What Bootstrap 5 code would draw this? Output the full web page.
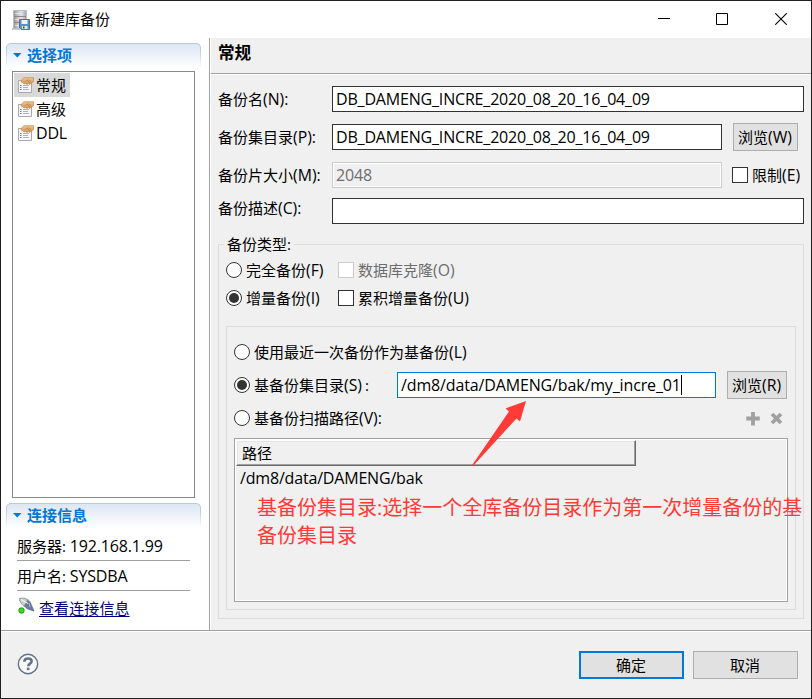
<!DOCTYPE html>
<html lang="zh-CN">
<head>
<meta charset="utf-8">
<meta name="viewport" content="width=device-width, initial-scale=1">
<title>新建库备份</title>
<link href="https://cdn.jsdelivr.net/npm/bootstrap@5.3.0/dist/css/bootstrap.min.css" rel="stylesheet">
<style>
body{font-family:"Open Sans","Noto Sans CJK SC",sans-serif;font-size:15px;line-height:20px;color:#000;background:#fff}
svg{display:block;flex:none}
.dialog{width:812px;height:699px;border:1px solid #202020;background:#f0f0f0}
.titlebar{height:37px;background:#fff;padding-left:10px}
.titlebar .caption{margin-left:4px;padding-bottom:1px}
.winbtn{width:59px;height:37px;padding-bottom:1px}
.winbtn.max{padding-right:2px}
.winbtn.close-x{padding-right:2px}
.side{width:209px;background:#fff;border-right:1px solid #a0a0a0;padding:5px 8px 0 5px}
.sect{height:25px;border:1px solid #b4cbe2;border-bottom:0;border-radius:5px 5px 0 0;background:linear-gradient(#dde6f4,#fff);color:#0078d7;font-weight:700;padding:0 0 2px 6px;position:relative}
.sect::before,.sect::after{content:"";position:absolute;bottom:0;width:1px;height:18px;background:linear-gradient(transparent,#fff)}
.sect::before{left:-1px}
.sect::after{right:-1px}
.sect span{padding-left:5px}
.tree{margin:3px 6px 5px 6px;height:427px;border:1px solid #828790;padding:1px}
.node{height:24px;padding:0 4px;width:max-content}
.node span{padding-left:2px}
.node span:not(.lat){padding-bottom:1px}
.node.sel{background:#d9d9d9}
.conninfo{padding-top:3px}
.info{margin:0 11px 0 11px;height:30px;border-bottom:1px solid #a0a0a0;white-space:pre}
.connlink{height:33px;padding-left:12px}
.viewlink{color:#00007f;text-decoration:underline;text-underline-offset:2px;text-decoration-thickness:1px;margin-left:4px;letter-spacing:.1px}
.main{border-left:1px solid #fff}
.pagehead{height:36px;border-bottom:1px solid #a0a0a0;box-shadow:0 1px #fff;padding:0 0 5px 7px;font-size:16.6px;font-weight:700}
.lines{padding:12px 7px 0 7px}
.line{height:26px}
.lab{width:114px;flex:none;white-space:nowrap;padding-bottom:1px}
.lab.up{padding-bottom:6px}
.lat{font-size:16px;letter-spacing:-.18px}
.entry{height:26px;border:1px solid #333;background:#fff;padding:0 0 0 3px;white-space:nowrap;color:#000}
.entry.off{border-color:#ccc;background:#f0f0f0;box-shadow:inset 0 0 0 1px #fff;color:#6d6d6d}
.entry.focus{border-color:#0078d7;letter-spacing:-.14px}
.push{border:1px solid #adadad;background:#e1e1e1;height:28px;border-radius:0;padding:0 1px 0 0;font-size:15px;line-height:20px;color:#000;flex:none}
.push .lat,.opt .lat,.lab .lat{font-size:15.800px;letter-spacing:0;line-height:1}
.push.def{border:2px solid #0078d7}
.tick{width:16px;height:16px;border:1px solid #333;background:#fff;flex:none}
.tick.off{border-color:#ccc}
.opt{gap:4px;white-space:nowrap}
.group{border:1px solid #dcdcdc}
.outer{margin-top:20px;height:375px;padding:0 7px}
.legendtxt{width:70px;height:20px;margin:-11px 0 0 -2px;padding-left:3px;background:#f0f0f0;white-space:nowrap}
.inner{height:284px;margin-top:18px;padding:0 7px}
.tools{gap:10px;padding:2px 5px 0 0}
.grid{height:164px;margin-top:10px;border:1px solid #a0a0a0;box-shadow:inset 0 0 0 1px #fff;padding:1px}
.colhead{width:400px;height:26px;border:1px solid;border-color:#fff #696969 #696969 #fff;box-shadow:inset -1px -1px #a0a0a0,inset 1px 1px #e3e3e3;padding-left:5px}
.cell{padding:2px 0 0 4px}
.note{left:256px;top:493px;font-size:20px;line-height:28px;color:#ff3a37;white-space:nowrap}
.arrow{left:464px;top:395px}
.caret{width:1px;height:20px;background:#000}
.foot{height:68px;border-top:1px solid #a0a0a0;box-shadow:inset 0 1px #fff;padding:0 13px 0 16px}
.help{margin-bottom:2px}
</style>
<script src="https://cdn.jsdelivr.net/npm/bootstrap@5.3.0/dist/js/bootstrap.bundle.min.js"></script>
</head>
<body>
<svg width="0" height="0" class="position-absolute">
  <defs>
    <linearGradient id="hand" x2="0" y2="1"><stop stop-color="#f3c990"/><stop offset="1" stop-color="#d0914f"/></linearGradient>
    <linearGradient id="srv"><stop stop-color="#8f8f8f"/><stop offset=".35" stop-color="#c8c8cc"/><stop offset=".6" stop-color="#e2e4f2"/><stop offset="1" stop-color="#a0a3ad"/></linearGradient>
    <symbol id="prop" viewBox="0 0 16 16">
      <path d="M.5 3.500h13v12H.5z" fill="#f6f6f6" stroke="#a9a9a9"/>
      <path d="M2 8.500h1.500M2 12.500h1.500" stroke="#5470a8"/><path d="M2 10.500h1.500" stroke="#5a9a5a"/>
      <path d="M5 8.500h6M5 10.500h5M5 12.500h6" stroke="#b4b4b4"/>
      <path d="M3.500 3 6 .7h9.500v4L13 6.500l-1.500 1-1-1-1.500 1-1.200-1-1.800.5-1-1.500-1.800-.3z" fill="url(#hand)" stroke="#c08a50" stroke-width=".7"/>
      <path d="M7 4.500l2-1.500 3 3M9.500 2.500l3.500 2" fill="none" stroke="#a66f3a" stroke-width=".5"/>
    </symbol>
  </defs>
</svg>
<div class="dialog d-flex flex-column position-relative overflow-hidden">
  <header class="titlebar d-flex align-items-center">
    <svg width="20" height="20" viewBox="0 0 20 20">
      <path d="M1 18h16l2 2H1z" fill="#ccc"/>
      <path d="M2.500.5h13v18h-13z" fill="url(#srv)" stroke="#bdbdbd"/>
      <path d="M3 6.500h12M3 12.500h12" stroke="#8a8a8a"/><path d="M4 3.500h5M4 9.500h4M4 15.500h4" stroke="#fff" opacity=".6"/>
      <path d="M8.500 9.500h10v10h-8l-2-2z" fill="#5e8fc6" stroke="#4474a8"/>
      <path d="M10.500 10h6v4h-6z" fill="#eef4fb"/><path d="M11 16h5.500v3H11z" fill="#e4e8ee"/><path d="M12 16.500h1.500v2H12z" fill="#345"/>
    </svg>
    <span class="caption">新建库备份</span>
    <div class="d-flex ms-auto">
      <div class="winbtn d-flex align-items-center justify-content-center"><svg width="12" height="12"><path d="M0 5.500h12" stroke="#000"/></svg></div>
      <div class="winbtn max d-flex align-items-center justify-content-center"><svg width="12" height="12"><path d="M.5.5h11v11H.5z" fill="none" stroke="#000"/></svg></div>
      <div class="winbtn close-x d-flex align-items-center justify-content-center"><svg width="12" height="12"><path d="M.2.2l11.600 11.600M11.800.2L.2 11.800" fill="none" stroke="#000" stroke-width="1.100"/></svg></div>
    </div>
  </header>
  <div class="d-flex flex-grow-1">
    <aside class="side flex-shrink-0">
      <div class="sect d-flex align-items-center"><svg width="9" height="5"><path d="M0 0h8.500L4.300 4.500z" fill="#0078d7"/></svg><span>选择项</span></div>
      <div class="tree">
        <div class="node sel d-flex align-items-center"><svg width="16" height="16"><use href="#prop"/></svg><span>常规</span></div>
        <div class="node d-flex align-items-center"><svg width="16" height="16"><use href="#prop"/></svg><span>高级</span></div>
        <div class="node d-flex align-items-center"><svg width="16" height="16"><use href="#prop"/></svg><span class="lat">DDL</span></div>
      </div>
      <div class="sect d-flex align-items-center"><svg width="9" height="5"><path d="M0 0h8.500L4.300 4.500z" fill="#0078d7"/></svg><span>连接信息</span></div>
      <section class="conninfo">
        <div class="info d-flex align-items-center"><span>服务器: <span class="lat">192.168.1.99</span></span></div>
        <div class="info d-flex align-items-center"><span>用户名: <span class="lat">SYSDBA</span></span></div>
      </section>
      <div class="connlink d-flex align-items-center">
        <svg width="17" height="18" viewBox="0 0 17 18" class="mb-1">
          <path d="M1.500 1.500c4-1 8 0 10.500 3l1 5.500c-5 1-9-1-11-6z" fill="#c9d0d3" stroke="#8e979b"/>
          <path d="M9.500 3.500l3 2.500 3.500 8-6.500-2-3-3z" fill="#6b7b9c" stroke="#56647f" stroke-width=".7"/>
          <path d="M3 2.500l7 4" stroke="#fff"/><path d="M11 6l1 4" stroke="#b4c0d8"/>
          <circle cx="3.500" cy="13.500" r="2.700" fill="#35e01b" stroke="#169b0d"/>
        </svg>
        <a class="viewlink" href="#">查看连接信息</a>
      </div>
    </aside>
    <main class="main flex-grow-1">
      <div class="pagehead d-flex align-items-center">常规</div>
      <div class="lines">
        <div class="line d-flex align-items-center"><div class="lab">备份名<span class="lat">(N):</span></div><div class="entry lat flex-grow-1 d-flex align-items-center">DB_DAMENG_INCRE_2020_08_20_16_04_09</div></div>
        <div class="line d-flex align-items-center" style="margin-top:12px"><div class="lab">备份集目录<span class="lat">(P):</span></div><div class="entry lat d-flex align-items-center" style="width:390px">DB_DAMENG_INCRE_2020_08_20_16_04_09</div><button class="btn push" style="width:65px;margin-left:11px">浏览<span class="lat">(W)</span></button></div>
        <div class="line d-flex align-items-center" style="margin-top:12px"><div class="lab">备份片大小<span class="lat">(M):</span></div><div class="entry off lat d-flex align-items-center" style="width:390px">2048</div><div class="opt d-flex align-items-center" style="margin-left:10px"><span class="tick"></span><span>限制<span class="lat">(E)</span></span></div></div>
        <div class="line d-flex align-items-center" style="margin-top:10px"><div class="lab up">备份描述<span class="lat">(C):</span></div><div class="entry flex-grow-1"></div></div>
        <section class="group outer">
          <div class="legendtxt">备份类型:</div>
          <div class="d-flex" style="margin-top:6px">
            <div style="width:112px">
              <div class="opt d-flex align-items-center"><span class="tick rounded-circle"></span><span>完全备份<span class="lat">(F)</span></span></div>
              <div class="opt d-flex align-items-center mt-2"><svg width="16" height="16"><circle cx="8" cy="8" r="7.500" fill="#fff" stroke="#333"/><circle cx="8" cy="8" r="5" fill="#333"/></svg><span>增量备份<span class="lat">(I)</span></span></div>
            </div>
            <div>
              <div class="opt d-flex align-items-center" style="color:#6d6d6d"><span class="tick off"></span><span>数据库克隆<span class="lat">(O)</span></span></div>
              <div class="opt d-flex align-items-center mt-2"><span class="tick"></span><span>累积增量备份<span class="lat">(U)</span></span></div>
            </div>
          </div>
          <div class="group inner">
            <div class="opt d-flex align-items-center" style="margin-top:15px"><span class="tick rounded-circle"></span><span>使用最近一次备份作为基备份<span class="lat">(L)</span></span></div>
            <div class="d-flex align-items-center" style="height:28px;margin-top:9px">
              <div class="opt d-flex align-items-center" style="width:163px"><svg width="16" height="16"><circle cx="8" cy="8" r="7.500" fill="#fff" stroke="#333"/><circle cx="8" cy="8" r="5" fill="#333"/></svg><span>基备份集目录<span class="lat">(S)</span><span style="padding-left:3px">:</span></span></div>
              <div class="entry focus lat d-flex align-items-center" style="width:319px">/dm8/data/DAMENG/bak/my_incre_01<span class="caret"></span></div>
              <button class="btn push" style="width:60px;margin-left:11px">浏览<span class="lat">(R)</span></button>
            </div>
            <div class="d-flex align-items-center justify-content-between" style="margin-top:9px">
              <div class="opt d-flex align-items-center"><span class="tick rounded-circle"></span><span>基备份扫描路径<span class="lat">(V):</span></span></div>
              <div class="tools d-flex">
                <svg width="14" height="14"><path d="M7 0v13.500M.3 6.500h13.500" stroke="#a0a0a0" stroke-width="3.800"/></svg>
                <svg width="13" height="14"><path d="M2 2l9 9M11 2l-9 9" stroke="#a0a0a0" stroke-width="3.800"/></svg>
              </div>
            </div>
            <div class="grid">
              <div class="colhead d-flex align-items-center">路径</div>
              <div class="cell lat">/dm8/data/DAMENG/bak</div>
            </div>
          </div>
        </section>
      </div>
    </main>
  </div>
  <footer class="foot d-flex align-items-center">
    <svg class="help" width="22" height="22" viewBox="0 0 22 22"><circle cx="11" cy="11" r="9.700" fill="#f8f8f8" stroke="#647189" stroke-width="1.400"/><path d="M7.300 8.700C7.400 6.500 9 5.400 11 5.400s3.700 1.100 3.700 2.900c0 2.300-3.500 2.400-3.500 5" fill="none" stroke="#647189" stroke-width="2.500"/><path d="M9.800 14.700h2.700v2.400H9.800z" fill="#647189"/></svg>
    <button class="btn push def ms-auto" style="width:105px">确定</button>
    <button class="btn push" style="width:105px;margin-left:9px">取消</button>
  </footer>
  <svg class="arrow position-absolute" width="75" height="75"><path d="M6.500 70L44 15.500L40.500 12.500L61 5L55 25.500L51.500 22.500L8.500 69.500z" fill="#ff3a37"/></svg>
  <div class="note position-absolute">基备份集目录:选择一个全库备份目录作为第一次增量备份的基<br>备份集目录</div>
</div>
</body>
</html>
